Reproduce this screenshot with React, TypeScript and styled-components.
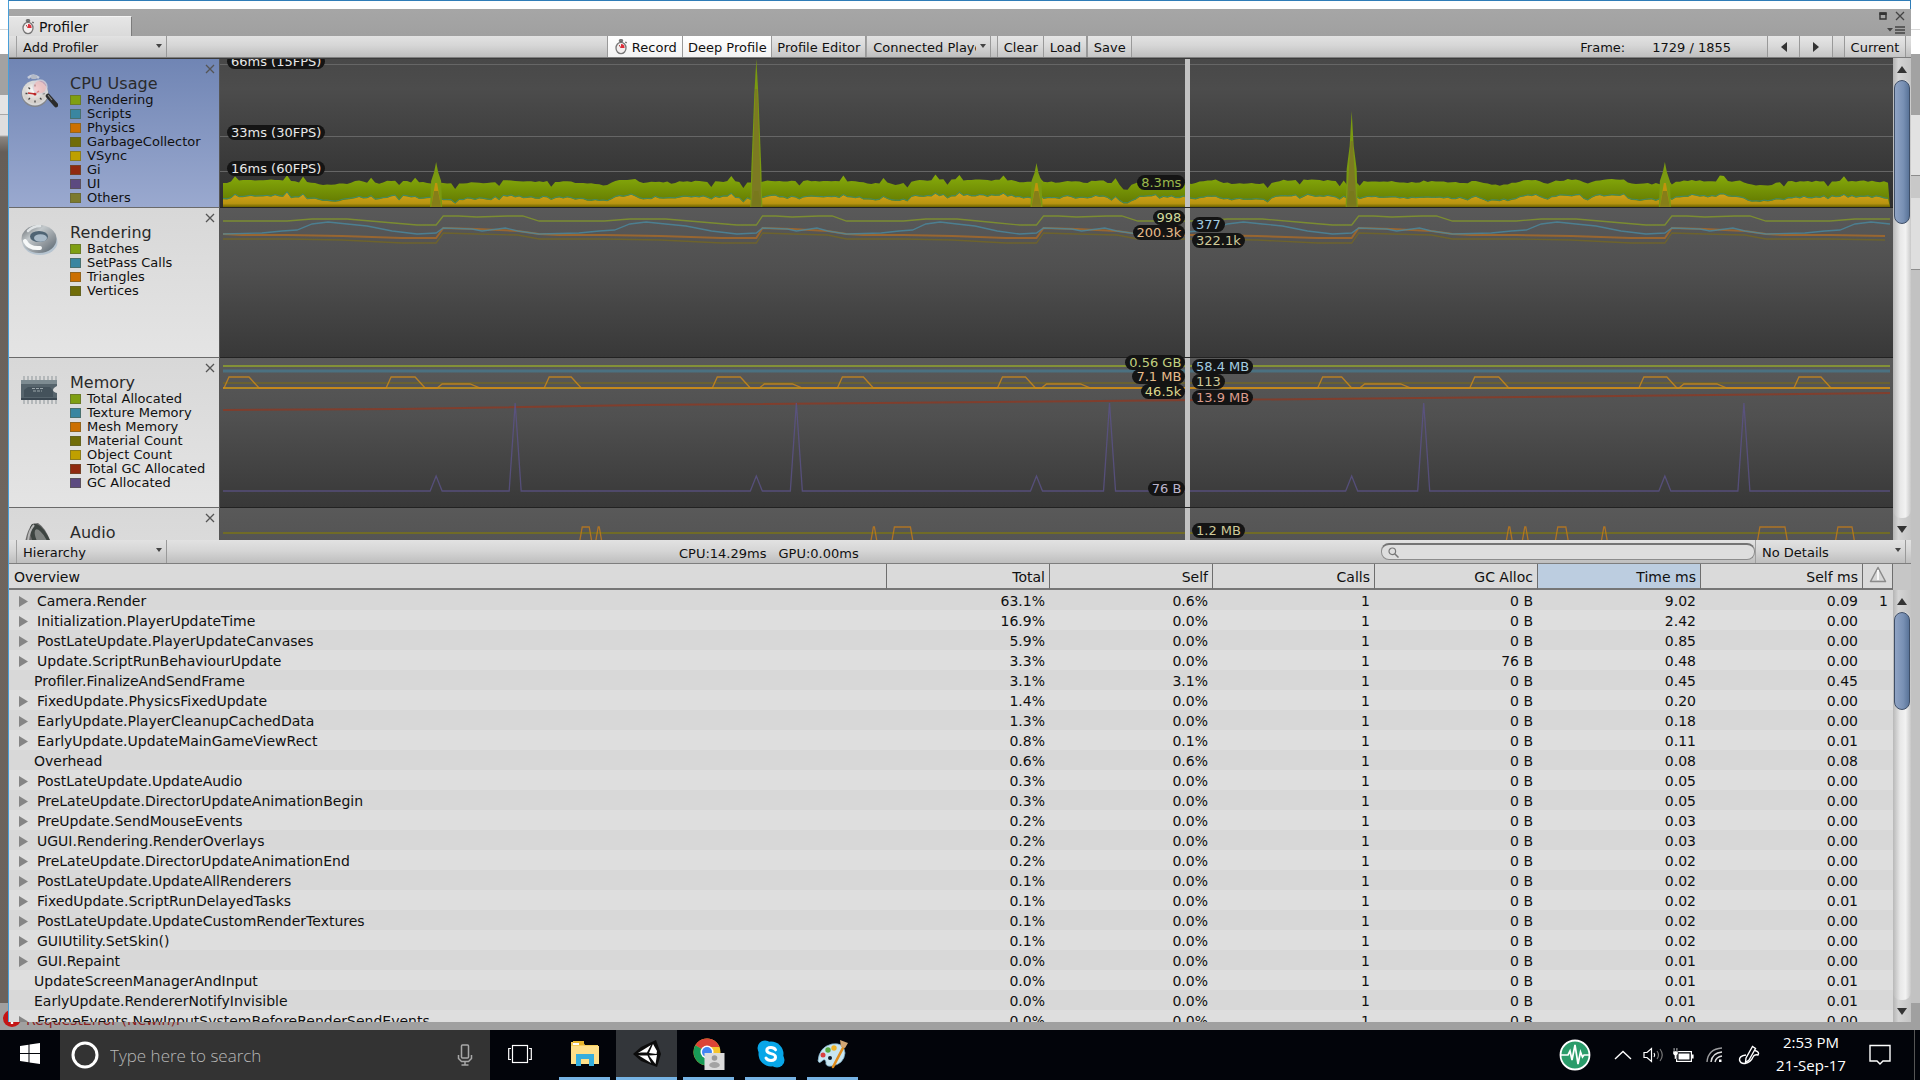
import React from "react";
import styled, { createGlobalStyle } from "styled-components";

const GlobalStyle = createGlobalStyle`
  * { box-sizing: border-box; }
  html, body { margin: 0; padding: 0; overflow: hidden; }
  body { font-family: "DejaVu Sans", Verdana, sans-serif; font-size: 13px; color: #101010; background: #a0a0a0; }
  button, select, input { font: inherit; color: inherit; margin: 0; border-radius: 0; }
`;

const C = {
  green: "#7f9f12",
  blue: "#3a86a0",
  orange: "#cc7000",
  olive: "#706c08",
  yellow: "#bfa000",
  red: "#902a10",
  purple: "#5c4a80",
  others: "#7c7a2e",
};

/* ---------- shell ---------- */

const Desktop = styled.div`
  display: flex;
  flex-direction: column;
  height: 100vh;
`;

const Workspace = styled.div`
  display: flex;
  flex: 1;
  min-height: 0;
`;

const LeftBackdrop = styled.div`
  width: 8px;
  position: relative;
  background: linear-gradient(#fff 0 29px, #d8d8d8 29px 30px, #fff 30px 54px, #a2a2a2 54px 95px, #e4e4e4 95px 114px, #a8a8a8 114px 115px, #dedede 115px 135px, #8a8681 137px, #655e58 152px, #6e655e 500px, #6a625c 1003px, #a0a0a0 1003px);
`;

const RightBackdrop = styled.div`
  width: 9px;
  background: linear-gradient(#fff 0 29px, #d8d8d8 29px 30px, #fff 30px 54px, #a2a2a2 54px 115px, #e2e2e2 115px 175px, #8c8c8c 175px 176px, #c8c8c8 176px 198px, #dedede 198px 269px, #8c8c8c 269px 270px, #c2c2c2 270px 1003px, #a0a0a0 1003px);
`;

const Window = styled.div`
  flex: 1;
  min-width: 0;
  display: flex;
  flex-direction: column;
  border-top: 1px solid #2f7db8;
  border-left: 1px solid #4a9fd8;
  background: #dcdcdc;
`;

const TitleStrip = styled.div`
  height: 8px;
  background: #fff;
  border-right: 1px solid #2f7db8;
`;

const TabBar = styled.div`
  height: 27px;
  display: flex;
  align-items: flex-end;
  justify-content: space-between;
  background: linear-gradient(#a6a6a6, #a0a0a0);
`;

const Tab = styled.button`
  display: flex;
  align-items: center;
  gap: 4px;
  width: 123px;
  height: 20px;
  padding: 1px 0 0 12px;
  border: 0;
  border-top: 1px solid #f4f4f4;
  border-right: 1px solid #7c7c7c;
  background: linear-gradient(#e6e6e6, #dadada);
  font-size: 14px;
`;

const WindowControls = styled.div`
  width: 26px;
  height: 27px;
  margin-right: 6px;
  display: flex;
  flex-wrap: wrap;
  justify-content: space-between;
  align-content: space-around;
`;

const BareButton = styled.button`
  display: flex;
  align-items: center;
  justify-content: center;
  padding: 0;
  border: 0;
  background: none;
`;

const MenuRow = styled(BareButton)`
  width: 100%;
  justify-content: flex-end;
`;

/* ---------- toolbars ---------- */

const Toolbar = styled.div<{ $h?: number }>`
  display: flex;
  align-items: stretch;
  height: ${(p) => p.$h || 22}px;
  flex: none;
  padding: 0 5px 0 7px;
  background: linear-gradient(#e2e2e2, #d6d6d6 45%, #bebebe);
  border-bottom: 1px solid #7e7e7e;
`;

const Spacer = styled.div<{ $w?: number }>`
  flex: ${(p) => (p.$w ? `0 0 ${p.$w}px` : "1")};
`;

const ToolButton = styled.button<{ $on?: boolean; $w: number; $left?: boolean }>`
  display: flex;
  align-items: center;
  justify-content: center;
  gap: 4px;
  width: ${(p) => p.$w}px;
  padding: 1px 0 0;
  border: 0;
  border-right: 1px solid #999;
  border-left: ${(p) => (p.$left ? "1px solid #999" : "0")};
  white-space: nowrap;
  background: ${(p) => (p.$on ? "linear-gradient(#fff, #f2f2f2)" : "linear-gradient(#e6e6e6, #dadada 45%, #c6c6c6)")};
`;

const SelectWrap = styled.div<{ $w: number }>`
  position: relative;
  width: ${(p) => p.$w}px;
  border-left: 1px solid #a0a0a0;
  border-right: 1px solid #999;
  &::after {
    content: "";
    position: absolute;
    right: 4px;
    top: 8px;
    border: 3px solid transparent;
    border-top: 4px solid #444;
    border-bottom: 0;
    pointer-events: none;
  }
`;

const ToolSelect = styled.select`
  appearance: none;
  width: 100%;
  height: 100%;
  padding: 1px 14px 0 6px;
  border: 0;
  background: none;
`;

const FrameInfo = styled.div`
  display: flex;
  align-items: center;
  gap: 27px;
  padding: 2px 36px 0 0;
`;

const Stats = styled.div`
  display: flex;
  align-items: center;
  gap: 12px;
  flex: 1;
  padding: 3px 0 0 512px;
`;

const SearchBox = styled.label`
  display: flex;
  align-items: center;
  width: 374px;
  height: 17px;
  margin: 3px 0 0;
  padding-left: 6px;
  border: 1px solid #8c8c8c;
  border-top: 2px solid #747474;
  border-radius: 8px;
  background: #dedede;
  & input {
    flex: 1;
    height: 12px;
    padding: 0 4px;
    border: 0;
    outline: 0;
    background: none;
  }
`;

/* ---------- charts ---------- */

const ChartPane = styled.div`
  display: flex;
  flex: none;
  height: 482px;
`;

const ChartList = styled.div`
  flex: 1;
  min-width: 0;
  overflow: hidden;
  border-top: 1px solid #3a3a3a;
  background: #555;
`;

const ChartRow = styled.section`
  display: flex;
  height: 150px;
  &:first-child { height: 149px; }
`;

const Legend = styled.div<{ $active?: boolean }>`
  position: relative;
  display: flex;
  gap: 12px;
  width: 211px;
  padding: 15px 0 0 11px;
  border-bottom: 1px solid #6a6a6a;
  border-right: 1px solid #555;
  background: ${(p) => (p.$active ? "linear-gradient(#7085b4, #9aa9cf)" : "linear-gradient(#d8d8d8, #e4e4e4)")};
`;

const LegendIcon = styled.svg`
  width: 38px;
  height: 38px;
  flex: none;
`;

const LegendTitle = styled.h2`
  margin: 0;
  font-size: 16px;
  line-height: 19px;
  font-weight: 400;
  color: #2a2a2a;
`;

const LegendItems = styled.ul`
  list-style: none;
  margin: 0;
  padding: 0;
`;

const LegendItem = styled.li<{ $c: string }>`
  display: flex;
  align-items: center;
  gap: 6px;
  line-height: 14px;
  white-space: nowrap;
  &::before {
    content: "";
    width: 9px;
    height: 8px;
    background: ${(p) => p.$c};
    border: 1px solid rgba(90, 90, 60, 0.5);
  }
`;

const CloseButton = styled(BareButton)`
  position: absolute;
  right: 3px;
  top: 4px;
  width: 12px;
  height: 12px;
`;

const Plot = styled.div<{ $deep?: boolean }>`
  position: relative;
  flex: 1;
  min-width: 0;
  border-bottom: 1px solid #222;
  background: ${(p) => (p.$deep ? "linear-gradient(#484848, #4c4c4c 20%, #2e2e2e)" : "linear-gradient(#595959, #505050 40%, #383838)")};
`;

const PlotSvg = styled.svg`
  display: block;
  width: 100%;
  height: 149px;
`;

const Cursor = styled.div`
  position: absolute;
  top: 0;
  bottom: 0;
  left: 57.7%;
  width: 5px;
  background: #c2c2c2;
`;

const Badge = styled.span<{ $side: "axis" | "left" | "right"; $y: number; $c?: string }>`
  position: absolute;
  top: ${(p) => p.$y}px;
  ${(p) => (p.$side === "axis" ? "left: 7px;" : p.$side === "left" ? "right: 42.3%;" : "left: 58.1%;")}
  padding: 0 4px;
  border-radius: 8px;
  line-height: 15px;
  white-space: nowrap;
  color: ${(p) => p.$c || "#e8e8e8"};
  background: #141414;
`;

/* ---------- scroll bars ---------- */

const ScrollBar = styled.div<{ $fill?: boolean }>`
  display: flex;
  flex-direction: column;
  width: 18px;
  flex: ${(p) => (p.$fill ? "1" : "none")};
  background: linear-gradient(90deg, #b4b4b4, #d4d4d4 30%, #c4c4c4);
`;

const Track = styled.div`
  flex: 1;
  border-radius: 8px;
  background: linear-gradient(90deg, #b8b8b8, #e8e8e8 40%, #f2f2f2 70%, #c8c8c8);
`;

const Thumb = styled.div<{ $h: number }>`
  height: ${(p) => p.$h}px;
  margin: 0 1px;
  border: 1px solid #3f4f68;
  border-radius: 8px;
  background: linear-gradient(90deg, #8fa3c4, #7890b4 60%, #5a7499);
`;

const ScrollArrow = styled(BareButton)<{ $down?: boolean }>`
  height: 22px;
  &::before {
    content: "";
    border: 5px solid transparent;
    ${(p) => (p.$down ? "border-top: 7px solid #333; border-bottom: 0;" : "border-bottom: 7px solid #333; border-top: 0;")}
  }
`;

/* ---------- table ---------- */

const TablePane = styled.div`
  display: flex;
  flex: 1;
  min-height: 0;
`;

const TableClip = styled.div`
  flex: 1;
  min-width: 0;
  overflow: hidden;
`;

const TableScroll = styled.div`
  display: flex;
  flex-direction: column;
  width: 18px;
`;

const Corner = styled.div`
  height: 26px;
  background: #c6c6c6;
`;

const Table = styled.table`
  width: 100%;
  table-layout: fixed;
  border-collapse: separate;
  border-spacing: 0;
  font-size: 14px;
  & th {
    height: 26px;
    padding: 2px 4px 0;
    font-weight: 400;
    text-align: right;
    white-space: nowrap;
    background: #dadada;
    border-right: 1px solid #6e6e6e;
    border-bottom: 2px solid #767676;
  }
  & th:first-child { text-align: left; padding-left: 5px; }
  & th:last-child { padding: 0; text-align: center; }
  & th[aria-sort] { background: #bccde0; }
  & tbody tr { background: #dedede; }
  & tbody tr:nth-child(odd) { background: #d8d8d8; }
  & td {
    height: 20px;
    padding: 3px 5px 0;
    line-height: 17px;
    text-align: right;
    white-space: nowrap;
  }
`;

const NameCell = styled.div<{ $leaf?: boolean }>`
  display: flex;
  align-items: center;
  gap: 9px;
  padding-left: ${(p) => (p.$leaf ? 20 : 5)}px;
`;

const Expander = styled.button`
  width: 9px;
  height: 11px;
  padding: 0;
  border: 0;
  background: #858585;
  clip-path: polygon(0 0, 100% 50%, 0 100%);
`;

const StatusStrip = styled.div`
  position: relative;
  height: 8px;
  flex: none;
  margin-left: -9px;
  background: #a0a0a0;
`;

const StatusText = styled.div`
  height: 8px;
  overflow: hidden;
  display: flex;
  align-items: flex-end;
  padding-left: 26px;
  font-size: 14px;
  line-height: 20px;
  color: #8a2020;
`;

const ErrorIcon = styled.svg`
  position: absolute;
  left: 3px;
  bottom: 3px;
  width: 18px;
  height: 17px;
  clip-path: polygon(0 0, 5px 0, 5px 12px, 100% 12px, 100% 100%, 0 100%);
`;

/* ---------- taskbar ---------- */

const Taskbar = styled.footer`
  display: flex;
  align-items: stretch;
  height: 50px;
  flex: none;
  background: #02040a;
  color: #fff;
  font-family: "Open Sans", "Noto Sans", sans-serif;
`;

const TaskButton = styled(BareButton)<{ $w: number; $ml?: number; $open?: boolean; $active?: boolean }>`
  width: ${(p) => p.$w}px;
  margin-left: ${(p) => p.$ml || 0}px;
  border-bottom: 3px solid ${(p) => (p.$open ? "#76b3e4" : "transparent")};
  background: ${(p) => (p.$active ? "#33363a" : "none")};
  background-clip: padding-box;
`;

const TaskSearch = styled.label`
  display: flex;
  align-items: center;
  gap: 11px;
  width: 430px;
  padding: 0 17px 0 11px;
  background: #333;
  & input {
    flex: 1;
    min-width: 0;
    padding: 0;
    border: 0;
    outline: 0;
    background: none;
    font-size: 17px;
    font-weight: 300;
  }
  & input::placeholder { color: #b8b8b8; opacity: 1; }
`;

const TrayButton = styled(BareButton)<{ $w: number }>`
  width: ${(p) => p.$w}px;
`;

const Clock = styled.time`
  width: 86px;
  margin-right: 5px;
  padding-top: 1px;
  text-align: center;
  font-size: 15px;
  line-height: 23px;
  white-space: nowrap;
`;

const DesktopPeek = styled.div`
  width: 6px;
  border-left: 1px solid #555;
`;

/* ---------- drawings ---------- */

const Stopwatch = () => (
  <svg width="14" height="16" viewBox="0 0 14 16" aria-hidden="true">
    <rect x="5.3" y="0.5" width="3.4" height="2.4" rx="0.8" fill="#777" stroke="#444" strokeWidth="0.6" />
    <ellipse cx="7" cy="9" rx="5" ry="5.700" fill="#f2eeee" stroke="#777" strokeWidth="1.300" />
    <path d="M7 9V5A3.800 4 0 0 1 10.600 9Z" fill="#e02b38" />
    <path d="M7 9L5.2 6" stroke="#a33" strokeWidth="0.9" />
    <path d="M11.4 2.8l1.2 1.2" stroke="#555" strokeWidth="1.2" />
  </svg>
);

const Cross = ({ color = "#555" }: { color?: string }) => (
  <svg width="10" height="10" viewBox="0 0 10 10" aria-hidden="true">
    <path d="M1 1L9 9M9 1L1 9" stroke={color} strokeWidth="1.3" />
  </svg>
);

const CpuIcon = () => (
  <LegendIcon viewBox="0 0 38 38" aria-hidden="true">
    <defs>
      <radialGradient id="face" cx="0.45" cy="0.35"><stop offset="0" stopColor="#fff" /><stop offset="1" stopColor="#d4cfca" /></radialGradient>
    </defs>
    <path d="M8 4q5-5 11 0" stroke="#c4cad8" strokeWidth="2.500" fill="none" />
    <rect x="11" y="1" width="6" height="4" rx="1.500" fill="#b4bac6" />
    <ellipse cx="15" cy="20" rx="13.500" ry="13" fill="#85878c" />
    <ellipse cx="15" cy="19" rx="13" ry="12.400" fill="#d8d8d8" />
    <ellipse cx="15" cy="19.500" rx="11" ry="10.300" fill="url(#face)" />
    <path d="M15 10.500v2M15 26.500v2M5.500 19.500h2M22.500 19.500h2M8.500 13.500l1.500 1.500M8.500 25.500l1.500-1.500M21.500 25.500l-1.500-1.500" stroke="#444" strokeWidth="1.300" />
    <path d="M15 20L8 19M15 20l4-3" stroke="#c03030" strokeWidth="1.400" />
    <circle cx="15" cy="20" r="1.500" fill="#b22" />
    <circle cx="20" cy="13" r="7" fill="#f2b4b8" fillOpacity="0.6" stroke="#d4d8e0" strokeOpacity="0.700" strokeWidth="1.500" />
    <path d="M28 22L36 31" stroke="#2b2b2b" strokeWidth="4.500" strokeLinecap="round" />
    <path d="M28 21L32 26" stroke="#8a8a8a" strokeWidth="1.200" />
  </LegendIcon>
);

const RingIcon = () => (
  <LegendIcon viewBox="0 0 38 38" aria-hidden="true">
    <defs>
      <linearGradient id="ring" x1="0" y1="0" x2="1" y2="1"><stop offset="0" stopColor="#5c6166" /><stop offset="0.35" stopColor="#c3c9cc" /><stop offset="0.7" stopColor="#8b9298" /><stop offset="1" stopColor="#50606c" /></linearGradient>
    </defs>
    <ellipse cx="20" cy="19" rx="17.500" ry="13" fill="#9db4c8" opacity="0.6" />
    <ellipse cx="19" cy="16" rx="17.500" ry="14" fill="url(#ring)" />
    <ellipse cx="19" cy="13.500" rx="9" ry="5.500" fill="#4f6474" />
    <ellipse cx="20.500" cy="15" rx="6.500" ry="3.800" fill="#a9bac8" />
    <path d="M5 18q4 8 15 7" stroke="#f6f8f8" strokeWidth="4" fill="none" strokeLinecap="round" />
    <path d="M8 8q5-5 12-5" stroke="#dfe3e5" strokeWidth="2.500" fill="none" strokeLinecap="round" />
  </LegendIcon>
);

const ChipIcon = () => (
  <LegendIcon viewBox="0 0 38 38" aria-hidden="true">
    <path d="M3 5h34M3 29h34" stroke="#b4b8ba" strokeWidth="4" strokeDasharray="2 2" />
    <path d="M1 7h36v6q-4 2-4 4t4 3v7H1Z" fill="#56646c" />
    <path d="M1 7h36v4H1Z" fill="#7d8b91" />
    <path d="M4 17l4-3h22l3 4v6H4Z" fill="#44525b" />
    <path d="M12 15.500h12M13 18h9" stroke="#9aa5aa" strokeWidth="1.200" strokeDasharray="3 1" />
    <path d="M1 25h36v2H1Z" fill="#394650" />
  </LegendIcon>
);

const HornIcon = () => (
  <LegendIcon viewBox="0 0 38 38" aria-hidden="true">
    <path d="M12 1Q4 12 4 34H34Q30 8 18 0Z" fill="#6b6b6b" />
    <ellipse cx="21" cy="17" rx="8" ry="18" transform="rotate(-28 21 17)" fill="#3d4441" />
    <ellipse cx="22" cy="18" rx="4.500" ry="13" transform="rotate(-28 22 18)" fill="#7e8280" />
    <path d="M14 2Q7 10 8 26" stroke="#b9b9b9" strokeWidth="2" fill="none" />
  </LegendIcon>
);

/* ---------- chart data ---------- */

const W = 1672;
const SPIKES = [216, 536, 816, 1131, 1444];
const SPIKE_TOPS = [103, 0, 104, 52, 103];

function makeRandom(seed: number) {
  let s = seed;
  return () => {
    s = (s * 16807) % 2147483647;
    return s / 2147483647;
  };
}

function buildCpu() {
  const rnd = makeRandom(4711);
  const top: string[] = [];
  const mid: string[] = [];
  const low: string[] = [];
  let hold = 0;
  let target = 0;
  for (let x = 3; x <= 1669; x += 4) {
    const r = rnd();
    if (r < 0.22) target = (rnd() - 0.45) * 8;
    hold += (target - hold) * 0.45;
    const bump = r > 0.94 ? -5 : r > 0.9 ? 5 : 0;
    const t = 123 + hold * 0.8 + bump + (rnd() - 0.5) * 1.5;
    const y = 139 + hold * 0.9 + bump * 0.6 + (rnd() - 0.4) * 2;
    top.push(`${x},${t.toFixed(1)}`);
    mid.push(`${x},${(y - 0.8).toFixed(1)}`);
    low.push(`${x},${Math.min(y, 146).toFixed(1)}`);
  }
  return { top: top.join(" "), mid: mid.join(" "), low: low.join(" ") };
}
const cpu = buildCpu();

type Pt = [number, number];
const wave = (shape: Pt[]) => {
  const starts = [-98, ...SPIKES];
  const ends = [...SPIKES, 1758];
  return starts
    .map((s, i) => shape.map(([x, y]) => [s + (x / 314) * (ends[i] - s), y]))
    .flat()
    .filter(([x]) => x >= 3 && x <= 1669)
    .map(([x, y]) => `${x.toFixed(1)},${y}`)
    .join(" ");
};
const batches: Pt[] = [[0, 17], [7, 8], [22, 8], [40, 9], [70, 8], [85, 8], [101, 13], [130, 13], [165, 13], [190, 11], [225, 11], [260, 14], [295, 17], [314, 17]];
const passes: Pt[] = [[0, 25], [7, 20], [35, 21], [45, 23], [68, 20], [80, 23], [101, 26], [140, 25], [160, 23], [175, 22], [190, 16], [206, 14], [225, 16], [245, 18], [270, 23], [295, 26], [314, 25]];
const tris: Pt[] = [[0, 30], [7, 20], [40, 21], [80, 23], [101, 26], [120, 27], [165, 27], [220, 28], [280, 30], [314, 30]];
const verts: Pt[] = [[0, 35], [7, 25], [40, 26], [80, 27], [101, 31], [120, 31], [165, 31], [220, 32], [280, 35], [314, 35]];

const meshBumps: Pt[] = [[4, 39], [166, 205], [324, 361], [492, 530], [617, 653], [777, 815], [930, 950], [1097, 1131], [1249, 1288], [1418, 1456], [1573, 1610]];
const meshHumps: Pt[] = [[217, 260], [539, 582], [821, 870], [1139, 1190], [1458, 1506]];
const meshLine = [...meshBumps.map((b) => [...b, 19]), ...meshHumps.map((b) => [...b, 26])]
  .sort((a, b) => a[0] - b[0])
  .map(([a, b, h]) => `${a},30 ${a + 5},${h} ${b - 10},${h} ${b},30`)
  .join(" ");

const GC_PEAKS = [295, 576, 889, 1203, 1523];
const gcLine = [...SPIKES.map((x) => [x, 118]), ...GC_PEAKS.map((x) => [x, 45])]
  .sort((a, b) => a[0] - b[0])
  .map(([x, y]) => `${x - 6},133 ${x},${y} ${x + 6},133`)
  .join(" ");

const audioBumps: Pt[] = [[362, 369], [378, 379], [653, 654], [674, 690], [1288, 1289], [1304, 1305], [1337, 1345], [1383, 1384], [1539, 1564], [1617, 1631]];

const Line = ({ points, color, width = 1.3, opacity = 0.8 }: { points: string; color: string; width?: number; opacity?: number }) => (
  <polyline points={points} fill="none" stroke={color} strokeWidth={width} strokeOpacity={opacity} vectorEffect="non-scaling-stroke" />
);

const CpuPlot = () => (
  <PlotSvg viewBox={`0 0 ${W} 149`} preserveAspectRatio="none">
    <defs>
      <linearGradient id="gGreen" x1="0" y1="118" x2="0" y2="148" gradientUnits="userSpaceOnUse"><stop offset="0" stopColor="#84a80a" /><stop offset="1" stopColor="#5f7400" /></linearGradient>
      <linearGradient id="gYellow" x1="0" y1="136" x2="0" y2="148" gradientUnits="userSpaceOnUse"><stop offset="0" stopColor="#d0a018" /><stop offset="0.7" stopColor="#b89410" /><stop offset="1" stopColor="#6c6400" /></linearGradient>
    </defs>
    {[6, 78, 113].map((y) => <path key={y} d={`M0 ${y - 0.5}H${W}`} stroke="#666" strokeWidth="1" />)}
    <polygon points={`3,148 ${cpu.top} 1669,148`} fill="url(#gGreen)" />
    <polygon points={`3,148 ${cpu.low} 1669,148`} fill="url(#gYellow)" />
    <Line points={cpu.mid} color="#3c8a78" width={1} opacity={0.9} />
    {SPIKES.map((x, i) => {
      const y = SPIKE_TOPS[i];
      const tall = y < 80;
      return (
        <g key={x}>
          <polygon points={`${x - 6},148 ${x - 5},${tall ? 110 : 122} ${x - 2},${y + (tall ? 35 : 10)} ${x},${y} ${x + 2},${y + (tall ? 35 : 10)} ${x + 5},${tall ? 110 : 122} ${x + 6},148`} fill="#7a9a10" />
          <polygon points={`${x - 5},148 ${x - 1},${tall ? y + 30 : 124} ${x + 1},${tall ? y + 30 : 124} ${x + 5},148`} fill={tall ? "#7c7a22" : "#c0940c"} />
          <path d={`M${x - 5} 148L${x - 2} 132H${x + 2}L${x + 5} 148Z`} fill="#77781c" fillOpacity="0.8" />
        </g>
      );
    })}
  </PlotSvg>
);

const RenderPlot = () => (
  <PlotSvg viewBox={`0 0 ${W} 149`} preserveAspectRatio="none">
    <Line points={wave(verts)} color="#77691c" opacity={0.7} />
    <Line points={wave(tris)} color="#b06c24" width={2} opacity={0.75} />
    <Line points={wave(passes)} color="#4a8aa0" />
    <Line points={wave(batches)} color="#849a28" />
  </PlotSvg>
);

const MemoryPlot = () => (
  <PlotSvg viewBox={`0 0 ${W} 149`} preserveAspectRatio="none">
    <Line points="3,8 1669,8" color="#8fa030" width={2} />
    <Line points="3,13 1669,13" color="#48788c" width={3} />
    <Line points="3,25 1669,25" color="#77691c" width={2} opacity={0.6} />
    <Line points="3,30 1669,30" color="#c89418" width={2} />
    <Line points={`3,30 ${meshLine} 1669,30`} color="#d08a18" />
    <Line points="3,52 180,51 420,47 880,43 1300,39 1669,35" color="#8c3a24" width={2} />
    <Line points={`3,133 ${gcLine} 1669,133`} color="#5b5288" opacity={0.8} />
  </PlotSvg>
);

const AudioPlot = () => (
  <PlotSvg viewBox={`0 0 ${W} 149`} preserveAspectRatio="none">
    <Line points="3,25 1669,25" color="#77701c" width={2} opacity={0.8} />
    {audioBumps.map(([a, b]) => (
      <Line key={a} points={`${a - 3},36 ${a},19 ${b},19 ${b + 3},36`} color="#c47c18" />
    ))}
  </PlotSvg>
);

type Mark = { side: "axis" | "left" | "right"; y: number; text: string; c?: string };
type Chart = {
  title: string;
  icon: React.ReactNode;
  plot: React.ReactNode;
  items: [string, string][];
  marks: Mark[];
};

const charts: Chart[] = [
  {
    title: "CPU Usage",
    icon: <CpuIcon />,
    plot: <CpuPlot />,
    items: [["Rendering", C.green], ["Scripts", C.blue], ["Physics", C.orange], ["GarbageCollector", C.olive], ["VSync", C.yellow], ["Gi", C.red], ["UI", C.purple], ["Others", C.others]],
    marks: [
      { side: "axis", y: -5, text: "66ms (15FPS)" },
      { side: "axis", y: 66, text: "33ms (30FPS)" },
      { side: "axis", y: 102, text: "16ms (60FPS)" },
      { side: "left", y: 116, text: "8.3ms", c: "#9cba4c" },
    ],
  },
  {
    title: "Rendering",
    icon: <RingIcon />,
    plot: <RenderPlot />,
    items: [["Batches", C.green], ["SetPass Calls", C.blue], ["Triangles", C.orange], ["Vertices", C.olive]],
    marks: [
      { side: "left", y: 2, text: "998", c: "#d0da9c" },
      { side: "left", y: 17, text: "200.3k", c: "#e8bc8c" },
      { side: "right", y: 9, text: "377", c: "#a4cde0" },
      { side: "right", y: 25, text: "322.1k", c: "#cfca9a" },
    ],
  },
  {
    title: "Memory",
    icon: <ChipIcon />,
    plot: <MemoryPlot />,
    items: [["Total Allocated", C.green], ["Texture Memory", C.blue], ["Mesh Memory", C.orange], ["Material Count", C.olive], ["Object Count", C.yellow], ["Total GC Allocated", C.red], ["GC Allocated", C.purple]],
    marks: [
      { side: "left", y: -3, text: "0.56 GB", c: "#c2d080" },
      { side: "left", y: 11, text: "7.1 MB", c: "#e8bc8c" },
      { side: "left", y: 26, text: "46.5k", c: "#dcd68c" },
      { side: "right", y: 1, text: "58.4 MB", c: "#a4cde0" },
      { side: "right", y: 16, text: "113", c: "#cfca9a" },
      { side: "right", y: 32, text: "13.9 MB", c: "#dc9c8c" },
      { side: "left", y: 123, text: "76 B", c: "#bcb4cc" },
    ],
  },
  {
    title: "Audio",
    icon: <HornIcon />,
    plot: <AudioPlot />,
    items: [],
    marks: [{ side: "right", y: 15, text: "1.2 MB", c: "#cfca9a" }],
  },
];

/* ---------- table data ---------- */

type Row = { name: string; leaf?: boolean; v: string[] };
const row = (name: string, values: string, leaf = false): Row => ({ name, leaf, v: values.split("|") });
const rows: Row[] = [
  row("Camera.Render", "63.1%|0.6%|1|0 B|9.02|0.09|1"),
  row("Initialization.PlayerUpdateTime", "16.9%|0.0%|1|0 B|2.42|0.00|"),
  row("PostLateUpdate.PlayerUpdateCanvases", "5.9%|0.0%|1|0 B|0.85|0.00|"),
  row("Update.ScriptRunBehaviourUpdate", "3.3%|0.0%|1|76 B|0.48|0.00|"),
  row("Profiler.FinalizeAndSendFrame", "3.1%|3.1%|1|0 B|0.45|0.45|", true),
  row("FixedUpdate.PhysicsFixedUpdate", "1.4%|0.0%|1|0 B|0.20|0.00|"),
  row("EarlyUpdate.PlayerCleanupCachedData", "1.3%|0.0%|1|0 B|0.18|0.00|"),
  row("EarlyUpdate.UpdateMainGameViewRect", "0.8%|0.1%|1|0 B|0.11|0.01|"),
  row("Overhead", "0.6%|0.6%|1|0 B|0.08|0.08|", true),
  row("PostLateUpdate.UpdateAudio", "0.3%|0.0%|1|0 B|0.05|0.00|"),
  row("PreLateUpdate.DirectorUpdateAnimationBegin", "0.3%|0.0%|1|0 B|0.05|0.00|"),
  row("PreUpdate.SendMouseEvents", "0.2%|0.0%|1|0 B|0.03|0.00|"),
  row("UGUI.Rendering.RenderOverlays", "0.2%|0.0%|1|0 B|0.03|0.00|"),
  row("PreLateUpdate.DirectorUpdateAnimationEnd", "0.2%|0.0%|1|0 B|0.02|0.00|"),
  row("PostLateUpdate.UpdateAllRenderers", "0.1%|0.0%|1|0 B|0.02|0.00|"),
  row("FixedUpdate.ScriptRunDelayedTasks", "0.1%|0.0%|1|0 B|0.02|0.01|"),
  row("PostLateUpdate.UpdateCustomRenderTextures", "0.1%|0.0%|1|0 B|0.02|0.00|"),
  row("GUIUtility.SetSkin()", "0.1%|0.0%|1|0 B|0.02|0.00|"),
  row("GUI.Repaint", "0.0%|0.0%|1|0 B|0.01|0.00|"),
  row("UpdateScreenManagerAndInput", "0.0%|0.0%|1|0 B|0.01|0.01|", true),
  row("EarlyUpdate.RendererNotifyInvisible", "0.0%|0.0%|1|0 B|0.01|0.01|", true),
  row("FrameEvents.NewInputSystemBeforeRenderSendEvents", "0.0%|0.0%|1|0 B|0.00|0.00|"),
];

const Picker = ({ w, label, text }: { w: number; label: string; text: string }) => (
  <SelectWrap $w={w}>
    <ToolSelect aria-label={label}><option>{text}</option></ToolSelect>
  </SelectWrap>
);

/* ---------- taskbar icons ---------- */

const WindowsLogo = () => (
  <svg width="20" height="21" viewBox="0 0 20 21"><path d="M0 3L8.500 1.800V10H0ZM9.500 1.600L20 0V10H9.500ZM0 11H8.500V19.200L0 18ZM9.500 11H20V21L9.500 19.400Z" fill="#fff" /></svg>
);
const Mic = () => (
  <svg width="16" height="22" viewBox="0 0 16 22" fill="none" stroke="#a8a8a8" strokeWidth="1.500"><rect x="4.500" y="1" width="7" height="13" rx="1" /><path d="M1.500 11v3.500l3 3h7l3-3V11M8 17.500V21M4.500 21h7" /></svg>
);
const TaskView = () => (
  <svg width="24" height="20" viewBox="0 0 24 20" fill="none" stroke="#fff" strokeWidth="1.200"><rect x="4.500" y="1.500" width="15" height="17" /><path d="M3 4.500H0.700V15.500H3M21 4.500H23.300V15.500H21" /></svg>
);
const Explorer = () => (
  <svg width="28" height="25" viewBox="0 0 28 25"><path d="M0 1h12l2 3h13v19H0Z" fill="#f6ce5c" /><path d="M2 0h11v4H2Z" fill="#e8b62c" /><rect x="2" y="2" width="6" height="2" fill="#fff" /><path d="M0 5h28v18H0Z" fill="#ffe08a" /><path d="M5 13h18v12h-5v-7h-8v7H5Z" fill="#36aede" /></svg>
);
const Unity = () => (
  <svg width="28" height="28" viewBox="0 0 28 28"><path d="M0 14L8 7L23 0L28 14L24 27L8 21Z" fill="#0c0c0c" /><path d="M5 13L18 5L14 12.500H8ZM20 4L24 11L23.500 14L16 13ZM5 15L18 23L14.500 15.500H7ZM16 15.500L24 15L22.500 24Z" fill="#fff" /></svg>
);
const Chrome = () => (
  <svg width="32" height="32" viewBox="0 0 32 32">
    <circle cx="14" cy="14" r="13.500" fill="#f6c52c" />
    <path d="M14 14L2.300 7.300A13.500 13.500 0 0 1 26.500 9H14Z" fill="#db4437" />
    <path d="M14 14L2.300 7.300A13.500 13.500 0 0 0 13 27.500L18 19Z" fill="#189b57" />
    <circle cx="14" cy="14" r="6.500" fill="#fff" /><circle cx="14" cy="14" r="5" fill="#4285f4" />
    <rect x="11.500" y="15" width="20" height="17" fill="#dcdcdc" /><circle cx="21.500" cy="20" r="2.800" fill="#9a9a9a" /><ellipse cx="21.500" cy="27" rx="5.300" ry="3" fill="#a4a4a4" />
  </svg>
);
const Skype = () => (
  <svg width="28" height="28" viewBox="0 0 28 28">
    <circle cx="14" cy="14" r="12.500" fill="#08a6e8" /><circle cx="8" cy="8" r="7.500" fill="#08a6e8" /><circle cx="20" cy="20" r="7.500" fill="#08a6e8" />
    <path d="M18.500 9.800Q17 7.500 13.800 7.600Q9.800 7.800 9.800 10.300Q9.800 12.800 14 13.600Q18.600 14.500 18.500 17.300Q18.300 20.300 14 20.500Q10.500 20.500 9 18" fill="none" stroke="#fff" strokeWidth="3" strokeLinecap="round" />
  </svg>
);
const Paint = () => (
  <svg width="32" height="30" viewBox="0 0 32 30">
    <path d="M1 22Q2 8 15 5Q27 3 28 14Q27 25 15 27Q8 28 9 23Q8 19 5 22Q2 25 1 22Z" fill="#c8e6f2" stroke="#7fb0c8" strokeWidth="0.800" />
    <circle cx="6" cy="16" r="2.500" fill="#d84040" /><circle cx="11" cy="11" r="2.700" fill="#58a840" /><circle cx="17" cy="9" r="2.700" fill="#f0b428" /><circle cx="13" cy="19" r="2" fill="#101828" />
    <path d="M27 7L16 28" stroke="#e08c1c" strokeWidth="2.600" strokeLinecap="round" />
    <path d="M23 1l8 3l-3 5l-4-1Z" fill="#d2a674" />
  </svg>
);
const Pulse = () => (
  <svg width="32" height="32" viewBox="0 0 32 32"><circle cx="16" cy="16" r="14.500" fill="#2a9c6a" stroke="#fff" strokeWidth="1.800" /><path d="M2 16h7l2-4l2 9l3-15l3 19l2.500-12l2 5l1.500-2h6" fill="none" stroke="#fff" strokeWidth="1.700" /></svg>
);
const Chevron = () => (
  <svg width="18" height="10" viewBox="0 0 18 10"><path d="M1 9L9 1.500L17 9" fill="none" stroke="#fff" strokeWidth="1.400" /></svg>
);
const Speaker = () => (
  <svg width="22" height="18" viewBox="0 0 22 18" fill="none" stroke="#fff" strokeWidth="1.200"><path d="M1 6.500h3l4.500-4v13l-4.500-4H1Z" /><path d="M11 7q1.500 2 0 4" /><path d="M14 5q3 4 0 8M17 3q4.500 6 0 12" stroke="#777" /></svg>
);
const Battery = () => (
  <svg width="22" height="18" viewBox="0 0 22 18"><rect x="4.600" y="5.600" width="14.800" height="9.800" fill="none" stroke="#fff" strokeWidth="1.200" /><rect x="6.500" y="7.500" width="11" height="6" fill="#fff" /><rect x="20" y="8.500" width="1.600" height="4" fill="#fff" /><path d="M1 5h5v3l-1.500 1.500V13h-2V9.500L1 8ZM1.500 2h1.200v3H1.500ZM4.300 2h1.200v3H4.300Z" fill="#fff" stroke="#02040a" strokeWidth="0.400" /></svg>
);
const Wifi = () => (
  <svg width="18" height="18" viewBox="0 0 18 18" fill="none" stroke="#ddd" strokeWidth="1.400"><path d="M1 16Q2 3 16 2" opacity="0.700" /><path d="M5 16Q6 7 16 6" /><path d="M9 16Q10 11 16 10" /><rect x="13" y="13.500" width="2.500" height="2.500" fill="#fff" stroke="none" /></svg>
);
const Pen = () => (
  <svg width="22" height="22" viewBox="0 0 22 22" fill="none" stroke="#fff" strokeWidth="1.400"><path d="M8 14L14.500 2.500L17.500 4.500L11 16L7.500 18.500Z" /><path d="M8 11Q1 12 1.500 16Q2.500 20 7 19.500Q13 18 15 13Q16 10 20 11Q22 8 17 6.500" /></svg>
);
const Notice = () => (
  <svg width="22" height="22" viewBox="0 0 22 22"><path d="M1 1.500H21V17H14L11 20L8 17H1Z" fill="none" stroke="#fff" strokeWidth="1.400" /></svg>
);

export default function App() {
  return (
    <Desktop>
      <GlobalStyle />
      <Workspace>
        <LeftBackdrop />
        <Window>
          <TitleStrip />
          <TabBar>
            <Tab><Stopwatch />Profiler</Tab>
            <WindowControls>
              <BareButton aria-label="Maximize">
                <svg width="8" height="8" viewBox="0 0 8 8"><path d="M1 1h6v6H1Z" fill="none" stroke="#333" strokeWidth="1.400" /><path d="M0.500 0.500h7v2.500h-7Z" fill="#333" /></svg>
              </BareButton>
              <BareButton aria-label="Close"><Cross color="#444" /></BareButton>
              <MenuRow aria-label="Window menu">
                <svg width="18" height="8" viewBox="0 0 18 8"><path d="M0 2h6l-3 3.500Z" fill="#444" /><path d="M8 1h10M8 4h10M8 7h10" stroke="#444" strokeWidth="1.300" /></svg>
              </MenuRow>
            </WindowControls>
          </TabBar>
          <Toolbar>
            <Picker w={151} label="Add profiler" text="Add Profiler" />
            <Spacer />
            <ToolButton $w={76} $left $on><Stopwatch />Record</ToolButton>
            <ToolButton $w={89} $on>Deep Profile</ToolButton>
            <ToolButton $w={94}>Profile Editor</ToolButton>
            <Picker w={125} label="Connected player" text="Connected Player" />
            <Spacer $w={6} />
            <ToolButton $w={47} $left>Clear</ToolButton>
            <ToolButton $w={43}>Load</ToolButton>
            <ToolButton $w={45} $left>Save</ToolButton>
            <Spacer $w={448} />
            <FrameInfo><span>Frame:</span><span>1729 / 1855</span></FrameInfo>
            <ToolButton $w={33} $left aria-label="Previous frame">
              <svg width="6" height="10" viewBox="0 0 6 10"><path d="M6 0v10L0 5Z" fill="#333" /></svg>
            </ToolButton>
            <ToolButton $w={33} aria-label="Next frame">
              <svg width="6" height="10" viewBox="0 0 6 10"><path d="M0 0v10L6 5Z" fill="#333" /></svg>
            </ToolButton>
            <Spacer $w={11} />
            <ToolButton $w={62} $left>Current</ToolButton>
          </Toolbar>

          <ChartPane>
            <ChartList>
              {charts.map((c, i) => (
                <ChartRow key={c.title}>
                  <Legend $active={i === 0}>
                    {c.icon}
                    <div>
                      <LegendTitle>{c.title}</LegendTitle>
                      <LegendItems>
                        {c.items.map(([name, color]) => <LegendItem key={name} $c={color}>{name}</LegendItem>)}
                      </LegendItems>
                    </div>
                    <CloseButton aria-label={`Remove ${c.title}`}><Cross /></CloseButton>
                  </Legend>
                  <Plot $deep={i === 0}>
                    {c.plot}
                    <Cursor />
                    {c.marks.map((m) => <Badge key={m.text} $side={m.side} $y={m.y} $c={m.c}>{m.text}</Badge>)}
                  </Plot>
                </ChartRow>
              ))}
            </ChartList>
            <ScrollBar>
              <ScrollArrow aria-label="Scroll up" />
              <Track><Thumb $h={144} /></Track>
              <ScrollArrow $down aria-label="Scroll down" />
            </ScrollBar>
          </ChartPane>

          <Toolbar $h={24}>
            <Picker w={151} label="View" text="Hierarchy" />
            <Stats><span>CPU:14.29ms</span><span>GPU:0.00ms</span></Stats>
            <SearchBox>
              <svg width="11" height="11" viewBox="0 0 11 11" aria-hidden="true"><circle cx="4.300" cy="4.300" r="3.300" fill="none" stroke="#777" strokeWidth="1.200" /><path d="M7 7l3.500 3.500" stroke="#777" strokeWidth="1.500" /></svg>
              <input type="text" aria-label="Search samples" />
            </SearchBox>
            <Picker w={151} label="Details" text="No Details" />
          </Toolbar>

          <TablePane>
            <TableClip>
              <Table>
                <colgroup>
                  <col />
                  {[163, 163, 162, 163, 163, 162, 30].map((w, i) => <col key={i} style={{ width: w }} />)}
                </colgroup>
                <thead>
                  <tr>
                    <th>Overview</th><th>Total</th><th>Self</th><th>Calls</th><th>GC Alloc</th>
                    <th aria-sort="descending">Time ms</th><th>Self ms</th>
                    <th aria-label="Warnings">
                      <svg width="18" height="17" viewBox="0 0 18 17"><path d="M9 1.500L16.500 15.500H1.500Z" fill="#d6d6d6" stroke="#8a8a8a" strokeWidth="1.500" strokeLinejoin="round" /><path d="M9 4v10" stroke="#f8f8f8" strokeWidth="2" /></svg>
                    </th>
                  </tr>
                </thead>
                <tbody>
                  {rows.map((r) => (
                    <tr key={r.name}>
                      <td>
                        <NameCell $leaf={r.leaf}>
                          {!r.leaf && <Expander aria-label={`Expand ${r.name}`} />}
                          {r.name}
                        </NameCell>
                      </td>
                      {r.v.map((v, i) => <td key={i}>{v}</td>)}
                    </tr>
                  ))}
                </tbody>
              </Table>
            </TableClip>
            <TableScroll>
              <Corner />
              <ScrollBar $fill>
                <ScrollArrow aria-label="Scroll up" />
                <Track><Thumb $h={98} /></Track>
                <ScrollArrow $down aria-label="Scroll down" />
              </ScrollBar>
            </TableScroll>
          </TablePane>
          <StatusStrip>
            <ErrorIcon viewBox="0 0 18 17" aria-hidden="true"><ellipse cx="9" cy="8.500" rx="9" ry="8.500" fill="#c41414" /><path d="M9 3v7M9 12v2" stroke="#fff" strokeWidth="2.400" /></ErrorIcon>
            <StatusText>RequestError (NewIn)r</StatusText>
          </StatusStrip>
        </Window>
        <RightBackdrop />
      </Workspace>

      <Taskbar>
        <TaskButton $w={60} aria-label="Start"><WindowsLogo /></TaskButton>
        <TaskSearch>
          <svg width="28" height="28" viewBox="0 0 28 28" aria-hidden="true"><circle cx="14" cy="14" r="12" fill="none" stroke="#fff" strokeWidth="3" /></svg>
          <input type="text" placeholder="Type here to search" aria-label="Type here to search" />
          <Mic />
        </TaskSearch>
        <TaskButton $w={60} aria-label="Task view"><TaskView /></TaskButton>
        <TaskButton $w={51} $ml={9} $open aria-label="File Explorer"><Explorer /></TaskButton>
        <TaskButton $w={61} $ml={6} $open $active aria-label="Unity"><Unity /></TaskButton>
        <TaskButton $w={51} $ml={6} $open aria-label="Chrome"><Chrome /></TaskButton>
        <TaskButton $w={51} $ml={11} $open aria-label="Skype"><Skype /></TaskButton>
        <TaskButton $w={51} $ml={11} $open aria-label="Paint"><Paint /></TaskButton>
        <Spacer />
        <TrayButton $w={58} aria-label="Monitor"><Pulse /></TrayButton>
        <TrayButton $w={38} aria-label="Show hidden icons"><Chevron /></TrayButton>
        <TrayButton $w={24} aria-label="Volume"><Speaker /></TrayButton>
        <TrayButton $w={34} aria-label="Battery"><Battery /></TrayButton>
        <TrayButton $w={30} aria-label="Network"><Wifi /></TrayButton>
        <TrayButton $w={38} aria-label="Pen"><Pen /></TrayButton>
        <Clock>2:53 PM<br />21-Sep-17</Clock>
        <TrayButton $w={42} aria-label="Notifications"><Notice /></TrayButton>
        <Spacer $w={13} />
        <DesktopPeek />
      </Taskbar>
    </Desktop>
  );
}
